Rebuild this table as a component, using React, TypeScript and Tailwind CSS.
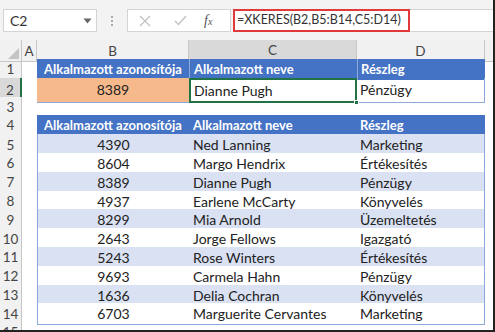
import React from "react";

const font = { fontFamily: "Lato, 'Open Sans', sans-serif" };

const data = [
  ["4390", "Ned Lanning", "Marketing"],
  ["8604", "Margo Hendrix", "Értékesítés"],
  ["8389", "Dianne Pugh", "Pénzügy"],
  ["4937", "Earlene McCarty", "Könyvelés"],
  ["8299", "Mia Arnold", "Üzemeltetés"],
  ["2643", "Jorge Fellows", "Igazgató"],
  ["5243", "Rose Winters", "Értékesítés"],
  ["9693", "Carmela Hahn", "Pénzügy"],
  ["1636", "Delia Cochran", "Könyvelés"],
  ["6703", "Marguerite Cervantes", "Marketing"],
];

const cols = "grid grid-cols-[22px_15px_152px_168px_128px_1fr]";

function RowHdr({ n, active }: { n: number; active?: boolean }) {
  return (
    <div
      className={
        "flex items-center justify-center border-b border-r text-[13.5px] text-[#444] " +
        (active
          ? "bg-[#d9d9d9] border-r-[#217346] border-r-2 border-b-[#c6c6c6]"
          : "bg-[#f1f1f1] border-[#c6c6c6]")
      }
    >
      {n}
    </div>
  );
}

export default function App() {
  return (
    <div
      className="relative w-[495px] h-[332px] overflow-hidden bg-white border-r-2 border-b-2 border-[#222]"
      style={font}
    >
      {/* Toolbar */}
      <div className="h-[40px] bg-[#f3f3f3] flex items-start pt-[9px] pl-[3px]">
        <div className="w-[94px] h-[23px] bg-white border border-[#d4d4d4] flex items-center justify-between pl-[6px] pr-[4px]">
          <span className="text-[14px] text-[#333]">C2</span>
          <svg width="9" height="6" viewBox="0 0 9 6">
            <path d="M0.5 0.5 L8.5 0.5 L4.5 5.5 Z" fill="#666" />
          </svg>
        </div>
        <div className="w-[30px] h-[23px] flex flex-col items-center justify-center gap-[2px]">
          <span className="w-[2px] h-[2px] bg-[#aaa]" />
          <span className="w-[2px] h-[2px] bg-[#aaa]" />
          <span className="w-[2px] h-[2px] bg-[#aaa]" />
        </div>
        <div className="w-[104px] h-[23px] bg-white border border-[#d4d4d4] flex items-center">
          <svg className="ml-[11px]" width="12" height="12" viewBox="0 0 12 12">
            <path d="M1 1 L11 11 M11 1 L1 11" stroke="#c4c4c4" strokeWidth="1.4" />
          </svg>
          <svg className="ml-[23px]" width="13" height="11" viewBox="0 0 13 11">
            <path d="M1 6 L4.5 9.5 L12 1" stroke="#c4c4c4" strokeWidth="1.5" fill="none" />
          </svg>
          <span
            className="ml-[17px] text-[14px] text-[#555] italic"
            style={{ fontFamily: "'Liberation Serif', serif" }}
          >
            f<span className="text-[10px]">x</span>
          </span>
        </div>
        <div className="flex-1 h-[23px] ml-[2px] bg-white border-y border-[#d4d4d4] flex items-center">
          <div className="h-[23px] w-[177px] border-2 border-[#e03a3a] flex items-center pl-[2px] text-[12.5px] text-[#333]">
            =XKERES(B2,B5:B14,C5:D14)
          </div>
        </div>
      </div>

      {/* Column headers */}
      <div className={cols + " h-[19px] text-[13.5px] text-[#444]"}>
        <div className="bg-[#f1f1f1] border-r border-b border-[#c6c6c6] relative">
          <svg className="absolute right-[2px] bottom-[2px]" width="11" height="11" viewBox="0 0 11 11">
            <path d="M11 0 L11 11 L0 11 Z" fill="#c4c4c4" />
          </svg>
        </div>
        <div className="bg-[#f1f1f1] border-r border-b border-[#c6c6c6] flex items-center justify-center">A</div>
        <div className="bg-[#f1f1f1] border-r border-b border-[#c6c6c6] flex items-center justify-center">B</div>
        <div className="bg-[#d9d9d9] border-r border-[#c6c6c6] border-b-2 border-b-[#217346] flex items-center justify-center">C</div>
        <div className="bg-[#f1f1f1] border-r border-b border-[#c6c6c6] flex items-center justify-center">D</div>
        <div className="bg-[#f1f1f1] border-b border-[#c6c6c6]" />
      </div>

      {/* Row 1 */}
      <div className={cols + " h-[18.8px] text-[13px]"}>
        <RowHdr n={1} />
        <div />
        <div className="bg-[#4472c4] text-white font-bold flex items-center justify-center">Alkalmazott azonosítója</div>
        <div className="bg-[#4472c4] text-white font-bold flex items-center pl-[4px] border-l border-[#8eaadb]">Alkalmazott neve</div>
        <div className="bg-[#4472c4] text-white font-bold flex items-center pl-[3px] border-l border-[#8eaadb]">Részleg</div>
        <div />
      </div>
      {/* Row 2 */}
      <div className={cols + " h-[18.8px] text-[14px] text-[#222]"}>
        <RowHdr n={2} active />
        <div />
        <div className="bg-[#f6b98c] flex items-center justify-center border-b border-[#8eaadb]">8389</div>
        <div className="relative border-2 border-[#217346] flex items-center pl-[3px]">
          Dianne Pugh
          <span className="absolute right-[-4px] bottom-[-4px] w-[5px] h-[5px] bg-[#217346] border border-white" />
        </div>
        <div className="flex items-center pl-[3px] border-r border-b border-[#8eaadb]">Pénzügy</div>
        <div />
      </div>
      {/* Row 3 */}
      <div className={cols + " h-[18.8px]"}>
        <RowHdr n={3} />
        <div />
        <div />
        <div />
        <div />
        <div />
      </div>
      {/* Row 4 */}
      <div className={cols + " h-[18.8px] text-[13px]"}>
        <RowHdr n={4} />
        <div />
        <div className="bg-[#4472c4] text-white font-bold flex items-center justify-center">Alkalmazott azonosítója</div>
        <div className="bg-[#4472c4] text-white font-bold flex items-center pl-[4px]">Alkalmazott neve</div>
        <div className="bg-[#4472c4] text-white font-bold flex items-center pl-[3px]">Részleg</div>
        <div />
      </div>
      {data.map((r, i) => {
        const band = i % 2 === 0 ? "bg-[#d9e1f2]" : "bg-white";
        return (
          <div key={i} className={cols + " h-[18.8px] text-[14px] text-[#222]"}>
            <RowHdr n={i + 5} />
            <div />
            <div className={band + " flex items-center justify-center border-b border-l border-[#8eaadb]"}>{r[0]}</div>
            <div className={band + " flex items-center pl-[4px] border-b border-[#8eaadb]"}>{r[1]}</div>
            <div className={band + " flex items-center pl-[3px] border-b border-r border-[#8eaadb]"}>{r[2]}</div>
            <div />
          </div>
        );
      })}
      <div className={cols + " h-[18.8px]"}>
        <RowHdr n={15} />
        <div />
        <div />
        <div />
        <div />
        <div />
      </div>
    </div>
  );
}
